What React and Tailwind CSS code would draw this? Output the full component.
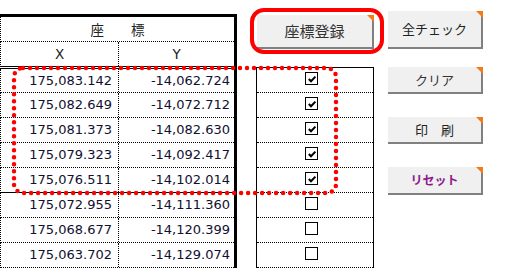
import React from 'react';

const rows = [
  { x: '175,083.142', y: '-14,062.724', checked: true },
  { x: '175,082.649', y: '-14,072.712', checked: true },
  { x: '175,081.373', y: '-14,082.630', checked: true },
  { x: '175,079.323', y: '-14,092.417', checked: true },
  { x: '175,076.511', y: '-14,102.014', checked: true },
  { x: '175,072.955', y: '-14,111.360', checked: false },
  { x: '175,068.677', y: '-14,120.399', checked: false },
  { x: '175,063.702', y: '-14,129.074', checked: false },
];

const jp = "font-['Noto_Sans_CJK_JP',sans-serif]";
const num = "font-['DejaVu_Sans',sans-serif]";

function SheetButton({ className, textClass, children }) {
  return (
    <div
      className={`relative box-border bg-[#f0f0f0] border-r-2 border-b-2 border-[#808080] flex items-center justify-center ${className}`}
    >
      <span className={`${jp} ${textClass}`}>{children}</span>
      <span className="absolute top-0 -right-[2px] w-0 h-0 border-t-[7px] border-l-[7px] border-t-[#f57a12] border-l-transparent" />
    </div>
  );
}

function CheckBox({ checked }) {
  return (
    <div className="w-[13px] h-[13px] box-border border-[1.5px] border-black bg-white flex items-center justify-center">
      {checked && (
        <svg width="10" height="10" viewBox="0 0 10 10">
          <path d="M1.8 5 L4 7.3 L8.4 2.6" fill="none" stroke="#000" strokeWidth="2" />
        </svg>
      )}
    </div>
  );
}

export default function App() {
  return (
    <div className="relative w-[508px] h-[268px] bg-white overflow-hidden flex">
      {/* coordinate table */}
      <div className="mt-[14px] w-[237px] box-border border-t-[3px] border-r-[3px] border-black">
        <div className="h-[25px] box-border border-l border-b border-dotted border-black flex items-center justify-center">
          <span className={`${jp} text-[13.5px] text-[#222]`}>座　　標</span>
        </div>
        <div className="h-[27px] box-border flex border-l border-dotted border-black border-b-[3px] [border-bottom-style:double]">
          <div className={`w-[118px] box-border border-r border-dotted border-black flex items-center justify-center ${num} text-[13.5px] text-[#222]`}>
            X
          </div>
          <div className={`flex-1 flex items-center justify-center ${num} text-[13.5px] text-[#222]`}>Y</div>
        </div>
        {rows.map((r, i) => (
          <div
            key={i}
            className={`${i === 0 ? 'h-[24px]' : 'h-[25px]'} box-border flex border-l border-b border-dotted border-black ${
              i === 4 ? '[border-bottom-style:solid]' : ''
            }`}
          >
            <div className={`w-[118px] box-border border-r border-dotted border-black flex items-center justify-end pr-[6px] ${num} text-[13px] text-[#101030]`}>
              {r.x}
            </div>
            <div className={`flex-1 flex items-center justify-end pr-[4px] ${num} text-[13px] text-[#101030]`}>{r.y}</div>
          </div>
        ))}
      </div>

      {/* register button + check column */}
      <div className="ml-[19px] w-[118px] flex flex-col">
        <div className="relative mt-[15px] ml-[1px]">
          <SheetButton className="w-[117px] h-[34px]" textClass="text-[15px] text-[#333]">
            座標登録
          </SheetButton>
          <div className="absolute -left-[7px] -top-[7px] w-[134px] h-[46px] box-border border-[4.5px] border-[#ff0000] rounded-[14px] pointer-events-none" />
        </div>
        <div className="mt-[18px] box-border border-t border-l border-r border-black">
          {rows.map((r, i) => (
            <div key={i} className="h-[25px] box-border border-b border-dotted border-black flex items-start pt-[4px] pl-[48px]">
              <CheckBox checked={r.checked} />
            </div>
          ))}
        </div>
      </div>

      {/* side buttons */}
      <div className="ml-[14px] w-[95px] flex flex-col">
        <SheetButton className="mt-[11px] h-[38px]" textClass="text-[13px] text-[#222]">
          全チェック
        </SheetButton>
        <SheetButton className="mt-[18px] h-[27px]" textClass="text-[13px] text-[#333]">
          クリア
        </SheetButton>
        <SheetButton className="mt-[23px] h-[27px]" textClass="text-[13px] text-[#222]">
          印　刷
        </SheetButton>
        <SheetButton className="mt-[23px] h-[28px]" textClass="text-[12px] font-bold text-[#8b1a8b]">
          リセット
        </SheetButton>
      </div>

      {/* red dotted annotation around the first five rows */}
      <svg className="absolute inset-0 pointer-events-none" width="508" height="268">
        <rect
          x="14"
          y="68"
          width="322"
          height="125"
          rx="9"
          fill="none"
          stroke="#ff0000"
          strokeWidth="4.5"
          strokeDasharray="0 7"
          strokeLinecap="round"
        />
      </svg>
    </div>
  );
}
